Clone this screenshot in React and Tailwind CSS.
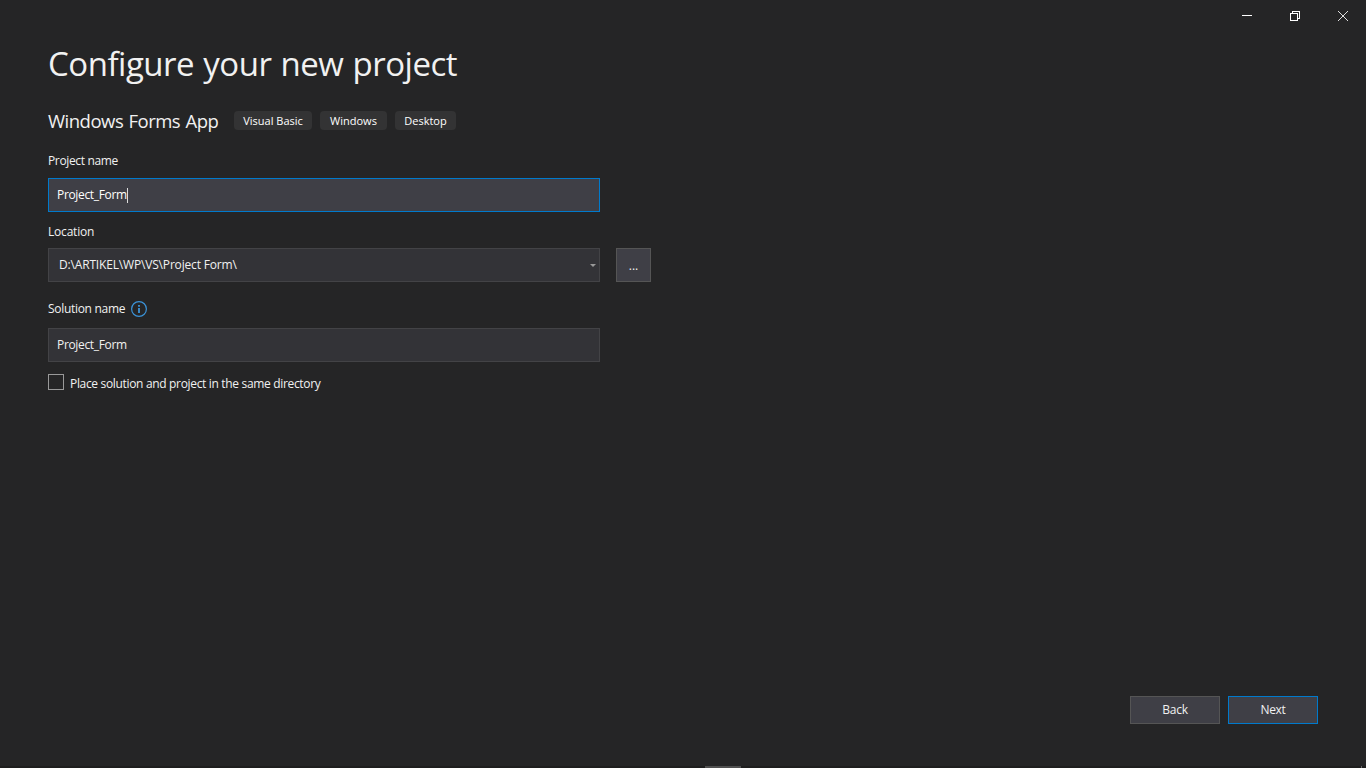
import React, { useState } from 'react';

const tags = [
    { name: 'Visual Basic', width: 'w-[78px]' },
    { name: 'Windows', width: 'w-[67px]' },
    { name: 'Desktop', width: 'w-[61px]' },
];

function WindowControls() {
    return (
        <div className="-mr-px flex h-8 justify-end text-white">
            <button className="flex w-12 items-center justify-center" aria-label="Minimize">
                <svg width="10" height="10" viewBox="0 0 10 10" shapeRendering="crispEdges">
                    <path d="M0 4h10v1H0z" fill="currentColor" />
                </svg>
            </button>
            <button className="flex w-12 items-center justify-center" aria-label="Restore">
                <svg width="10" height="10" viewBox="0 0 10 10" fill="none" stroke="currentColor" shapeRendering="crispEdges">
                    <path d="M0.5 2.5h7v7h-7zM2.5 2.5v-2h7v7h-2" />
                </svg>
            </button>
            <button className="flex w-12 items-center justify-center" aria-label="Close">
                <svg width="10" height="10" viewBox="0 0 10 10" fill="none" stroke="#dddddd">
                    <path d="M0 0l10 10M10 0L0 10" />
                </svg>
            </button>
        </div>
    );
}

function InfoIcon() {
    return (
        <svg width="16" height="16" viewBox="0 0 16 16" fill="none">
            <circle cx="8" cy="8" r="7.4" stroke="#3b93d8" strokeWidth="1.2" />
            <path d="M7.1 4h1.8v1.8H7.1zM7.1 7h1.8v5H7.1z" fill="#3b93d8" />
        </svg>
    );
}

export default function App() {
    const [sameDir, setSameDir] = useState(false);

    return (
        <div className="flex h-screen flex-col overflow-hidden bg-[#252526] font-['Open_Sans','Noto_Sans',sans-serif] text-[12px] leading-4 text-[#f1f1f1]">
            <WindowControls />

            <main className="flex-1 px-12 pt-2">
                <h1 className="h-12 text-[33px] leading-12 tracking-[-0.48px] [word-spacing:1px] whitespace-nowrap">Configure your new project</h1>

                <div className="mt-[22px] flex h-[21px] items-center">
                    <h2 className="w-[186px] text-[18.5px] leading-5 tracking-[-0.5px] [word-spacing:1px] whitespace-nowrap">Windows Forms App</h2>
                    <div className="flex gap-2">
                        {tags.map((tag) => (
                            <span key={tag.name} className={`${tag.width} mb-px flex h-[19px] items-center justify-center rounded-[4px] bg-[#333334] pt-0.5 text-[11px] whitespace-nowrap text-white`}>
                                {tag.name}
                            </span>
                        ))}
                    </div>
                </div>

                <div className="mt-[22px]">
                    <label className="block tracking-[-0.35px]">Project name</label>
                    <div className="mt-[9px] flex h-[34px] w-[552px] items-center border border-[#007acc] bg-[#3f3f46] px-2 tracking-[-0.34px] text-white">
                        <span>Project_Form</span>
                        <span className="h-[15px] w-px bg-[#dcdcdc]"></span>
                    </div>
                </div>

                <div className="mt-3">
                    <label className="block tracking-[-0.2px]">Location</label>
                    <div className="mt-2 flex gap-4">
                        <div className="flex h-[34px] w-[552px] items-center justify-between border border-[#434346] bg-[#333337] pr-[3px] pl-[10px]">
                            <span className="tracking-[-0.17px]">D:\ARTIKEL\WP\VS\Project Form\</span>
                            <svg width="6" height="3" viewBox="0 0 6 3">
                                <path d="M0 0h6L3 3z" fill="#999999" />
                            </svg>
                        </div>
                        <button className="h-[34px] w-[35px] border border-[#555555] bg-[#3f3f46] pt-0.5">...</button>
                    </div>
                </div>

                <div className="mt-[19px]">
                    <div className="flex h-4 items-center gap-[6px]">
                        <label className="w-[77px] tracking-[-0.3px] whitespace-nowrap">Solution name</label>
                        <InfoIcon />
                    </div>
                    <div className="mt-[11px] flex h-[34px] w-[552px] items-center border border-[#434346] bg-[#333337] px-2 tracking-[-0.34px]">
                        Project_Form
                    </div>
                </div>

                <label className="mt-3 flex items-start gap-[6px]">
                    <input
                        type="checkbox"
                        checked={sameDir}
                        onChange={(e) => setSameDir(e.target.checked)}
                        className="h-4 w-4 appearance-none border border-[#999999] checked:bg-[#007acc]"
                    />
                    <span className="pt-0.5 tracking-[-0.33px]">Place solution and project in the same directory</span>
                </label>
            </main>

            <footer className="flex justify-end gap-2 px-12 pb-[42px] tracking-[-0.3px]">
                <button className="h-7 w-[90px] border border-[#555555] bg-[#3f3f46]">Back</button>
                <button className="h-7 w-[90px] border border-[#007acc] bg-[#3f3f46]">Next</button>
            </footer>
            <div className="flex h-0.5 bg-[#1e1e1e] pl-[705px]">
                <div className="w-9 bg-[#505050]"></div>
                <div className="ml-[620px] w-px bg-[#6a6a6a]"></div>
            </div>
        </div>
    );
}
